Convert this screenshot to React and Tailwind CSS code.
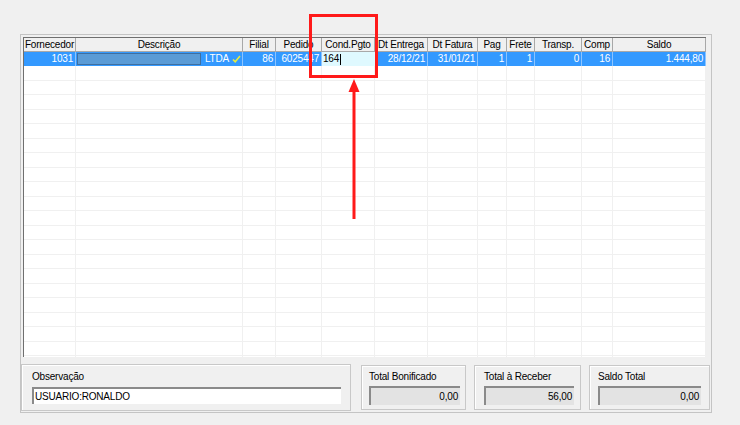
import React from 'react'

const COLUMNS = [
  { key: 'fornecedor', label: 'Fornecedor', w: 52 },
  { key: 'descricao', label: 'Descrição', w: 167 },
  { key: 'filial', label: 'Filial', w: 33 },
  { key: 'pedido', label: 'Pedido', w: 46 },
  { key: 'cond', label: 'Cond.Pgto', w: 53 },
  { key: 'entrega', label: 'Dt Entrega', w: 53 },
  { key: 'fatura', label: 'Dt Fatura', w: 50 },
  { key: 'pag', label: 'Pag', w: 29 },
  { key: 'frete', label: 'Frete', w: 28 },
  { key: 'transp', label: 'Transp.', w: 47 },
  { key: 'comp', label: 'Comp', w: 31 },
  { key: 'saldo', label: 'Saldo', w: 93 },
]

const ROW = {
  fornecedor: '1031',
  filial: '86',
  pedido: '6025447',
  cond: '164',
  entrega: '28/12/21',
  fatura: '31/01/21',
  pag: '1',
  frete: '1',
  transp: '0',
  comp: '16',
  saldo: '1.444,80',
}

const EMPTY_ROWS = Array.from({ length: 21 })

function HeaderRow() {
  return (
    <div className="flex h-[14px] shrink-0">
      {COLUMNS.map(c => (
        <div
          key={c.key}
          style={{ width: c.w }}
          className="shrink-0 bg-[#f0f0f0] border-r border-b border-[#a8a8a8] flex items-center justify-center text-black leading-none overflow-hidden whitespace-nowrap"
        >
          {c.label}
        </div>
      ))}
    </div>
  )
}

function SelectedRow() {
  return (
    <div className="flex h-[14px] shrink-0">
      {COLUMNS.map(c => {
        if (c.key === 'descricao') {
          return (
            <div key={c.key} style={{ width: c.w }} className="shrink-0 bg-[#3399ff] border-r border-[#8cc4ff] flex items-center pl-[1px] pr-[1px]">
              <div className="w-[124px] h-[12px] bg-[#5b9bd5] border border-[#3f6fa0]" />
              <span className="ml-[4px] text-white leading-none">LTDA</span>
              {/* status check */}
              <svg className="ml-auto" width="9" height="8" viewBox="0 0 9 8">
                <polyline points="1,4.5 3.2,6.8 8,1" fill="none" stroke="#e8ee3a" strokeWidth="1.6" />
              </svg>
            </div>
          )
        }
        if (c.key === 'cond') {
          return (
            <div key={c.key} style={{ width: c.w }} className="shrink-0 bg-[#dff9ff] flex items-center pl-[1px] leading-none text-black">
              {ROW.cond}
              <span className="inline-block w-[1px] h-[11px] bg-black ml-[1px]" />
            </div>
          )
        }
        return (
          <div
            key={c.key}
            style={{ width: c.w }}
            className="shrink-0 bg-[#3399ff] border-r border-[#8cc4ff] flex items-center justify-end pr-[2px] text-white leading-none overflow-hidden whitespace-nowrap"
          >
            {ROW[c.key]}
          </div>
        )
      })}
    </div>
  )
}

function EmptyRow() {
  return (
    <div className="flex h-[14.5px] shrink-0">
      {COLUMNS.map(c => (
        <div key={c.key} style={{ width: c.w }} className="shrink-0 border-r border-b border-[#f0f0f0]" />
      ))}
    </div>
  )
}

function GroupBox({ label, className, children }) {
  return (
    <div className={`border border-[#c8c8c8] shadow-[inset_1px_1px_0_#ffffff] flex flex-col ${className}`}>
      <span className="leading-none text-black">{label}</span>
      {children}
    </div>
  )
}

function TotalBox({ label, value, boxClass, inputClass }) {
  return (
    <GroupBox label={label} className={`h-[45px] mt-[1px] pt-[6px] ${boxClass}`}>
      <div className={`mt-[4px] h-[19px] bg-[#e3e3e3] border-t-2 border-l-2 border-t-[#8a8a8a] border-l-[#8a8a8a] flex items-center justify-end pr-[2px] text-black leading-none ${inputClass}`}>
        {value}
      </div>
    </GroupBox>
  )
}

export default function App() {
  return (
    <div
      className="relative w-[740px] h-[425px] bg-[#f0f0f0] pt-[34px] pl-[20px] text-[10px] tracking-[-0.2px]"
      style={{ fontFamily: '"Liberation Sans", Arial, sans-serif' }}
    >
      {/* main frame */}
      <div className="w-[692px] h-[379px] border border-[#c4c4c4] flex flex-col">
        {/* grid */}
        <div className="ml-[2px] mt-[2px] w-[683px] h-[320px] border-l border-t border-[#6f6f6f] bg-white overflow-hidden flex flex-col">
          <HeaderRow />
          <SelectedRow />
          {EMPTY_ROWS.map((_, i) => (
            <EmptyRow key={i} />
          ))}
        </div>

        {/* footer */}
        <div className="mt-[7px] flex">
          <GroupBox label="Observação" className="w-[330px] h-[47px] pt-[7px] pl-[10px]">
            <div className="mt-[5px] w-[309px] h-[17px] bg-white border-t-2 border-l-2 border-t-[#8a8a8a] border-l-[#8a8a8a] flex items-center pl-[1px] text-black leading-none">
              USUARIO:RONALDO
            </div>
          </GroupBox>
          <TotalBox label="Total Bonificado" value="0,00" boxClass="ml-[10px] w-[105px] pl-[7px]" inputClass="w-[91px]" />
          <TotalBox label="Total à Receber" value="56,00" boxClass="ml-[8px] w-[107px] pl-[9px]" inputClass="w-[90px]" />
          <TotalBox label="Saldo Total" value="0,00" boxClass="ml-[8px] w-[121px] pl-[8px]" inputClass="w-[103px]" />
        </div>
      </div>

      {/* highlight box around the edited cell */}
      <div className="absolute left-[309px] top-[14px] w-[69px] h-[64px] border-[3px] border-[#ff1a1a]" />

      {/* pointer arrow */}
      <svg className="absolute left-[347px] top-[78px]" width="14" height="142" viewBox="0 0 14 142">
        <rect x="5.5" y="10" width="3" height="131" fill="#ff1a1a" />
        <polygon points="7,1 12.5,14 1.5,14" fill="#ff1a1a" />
      </svg>
    </div>
  )
}
